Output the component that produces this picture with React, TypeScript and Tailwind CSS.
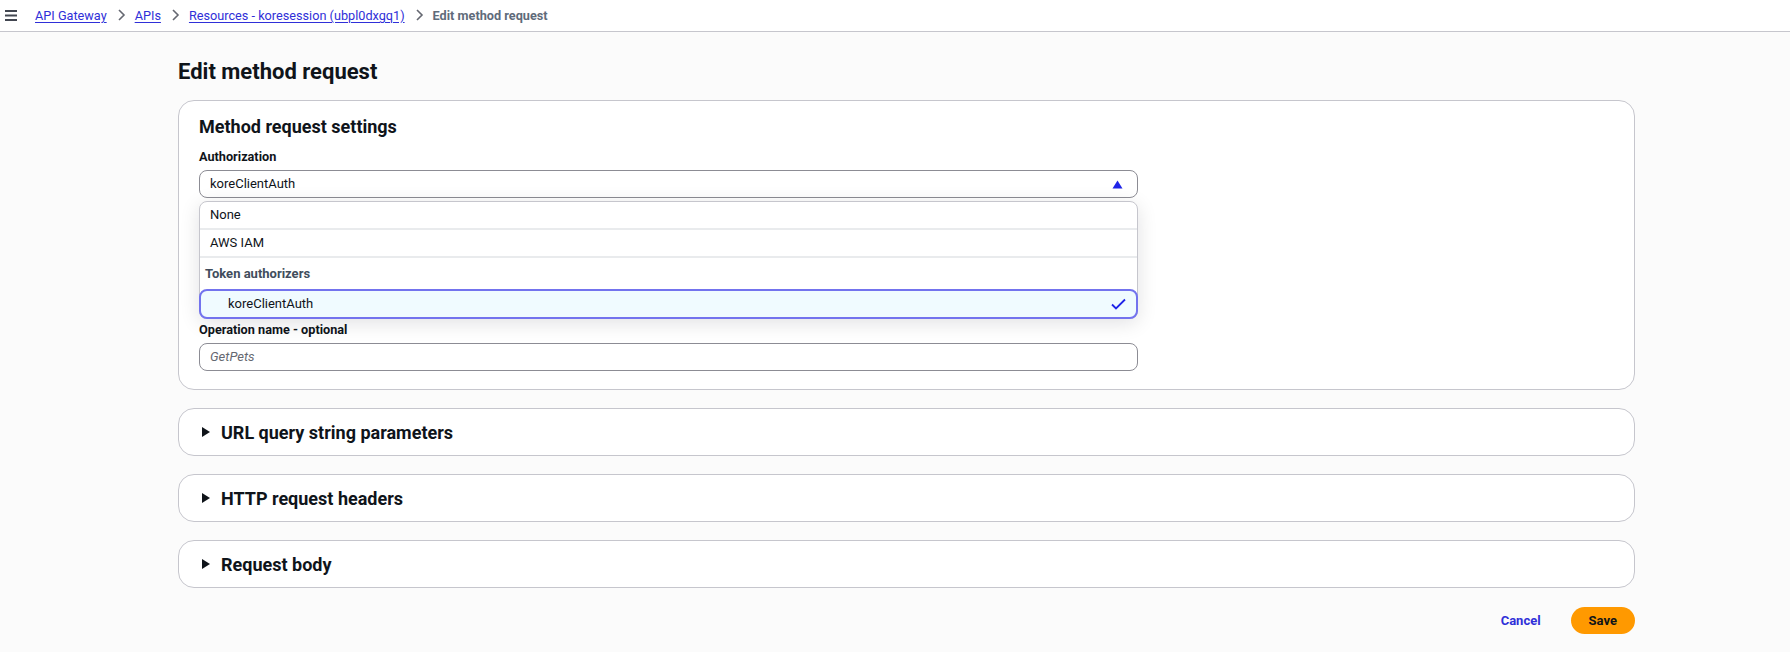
import React from 'react';

const font = { fontFamily: 'Roboto, "Noto Sans", Arial, sans-serif' };

function Chevron() {
  return (
    <svg width="16" height="16" viewBox="0 0 16 16" className="text-[#656871]">
      <path d="M6 3l5 5-5 5" fill="none" stroke="currentColor" strokeWidth="1.6" />
    </svg>
  );
}

function Caret() {
  return (
    <svg width="10" height="12" viewBox="0 0 10 12">
      <path d="M1 1L9 6 1 11z" fill="#0f141a" />
    </svg>
  );
}

function Collapsed({ title }: { title: string }) {
  return (
    <div className="flex h-[48px] items-center gap-[10px] rounded-[16px] border border-[#c6c6cd] bg-white pl-[22px]">
      <Caret />
      <h3 className="text-[18px] font-bold text-[#0f141a]">{title}</h3>
    </div>
  );
}

export default function App() {
  return (
    <div className="min-h-screen bg-[#fbfbfb] text-[#0f141a]" style={font}>
      {/* breadcrumbs */}
      <div className="flex h-[32px] items-center border-b border-[#c6c6cd] bg-white pl-[5px]">
        <svg width="13" height="11" viewBox="0 0 13 11" className="mr-[17px]">
          <path d="M0 1h12M0 5.5h12M0 10h12" stroke="#424650" strokeWidth="1.8" />
        </svg>
        <nav className="flex items-center gap-[6px] text-[12.7px]">
          <a className="text-[#2f2fd8] underline underline-offset-2">API Gateway</a>
          <Chevron />
          <a className="text-[#2f2fd8] underline underline-offset-2">APIs</a>
          <Chevron />
          <a className="text-[#2f2fd8] underline underline-offset-2">Resources - koresession (ubpl0dxgq1)</a>
          <Chevron />
          <span className="font-bold text-[#5f6b7a]">Edit method request</span>
        </nav>
      </div>

      <main className="pl-[178px] pr-[155px] pt-[26px]">
        <h1 className="text-[22px] font-bold leading-[28px]">Edit method request</h1>

        <section className="mt-[14px] rounded-[16px] border border-[#c6c6cd] bg-white px-[20px] pb-[18px] pt-[14px]">
          <h2 className="text-[18px] font-bold leading-[24px]">Method request settings</h2>

          <div className="mt-[9px] w-[939px]">
            <label className="block text-[12.7px] font-bold leading-[18px]">Authorization</label>
            <div className="relative mt-[4px]">
              <div className="flex h-[28px] items-center justify-between rounded-[8px] border border-[#8c8c94] bg-white pl-[10px] pr-[14px] text-[13px]">
                <span>koreClientAuth</span>
                <svg width="11" height="9" viewBox="0 0 11 9">
                  <path d="M5.5 0.5L10.5 8.5H0.5z" fill="#1f24e8" />
                </svg>
              </div>

              {/* open dropdown */}
              <div className="absolute left-0 right-0 top-[31px] z-10 rounded-[8px] border border-[#c6c6cd] bg-white text-[13px] shadow-[0_4px_20px_rgba(0,7,22,0.12)]">
                <div className="flex h-[28px] items-center border-b-2 border-[#e9ebed] pl-[10px]">None</div>
                <div className="flex h-[28px] items-center border-b-2 border-[#e9ebed] pl-[10px]">AWS IAM</div>
                <div className="flex h-[31px] items-center pl-[5px] font-bold text-[#414d5c]">Token authorizers</div>
                <div className="-mx-px -mb-px flex h-[30px] items-center justify-between rounded-[8px] border-2 border-[#7373ee] bg-[#f0fbff] pl-[27px] pr-[10px]">
                  <span>koreClientAuth</span>
                  <svg width="15" height="12" viewBox="0 0 15 12">
                    <path d="M1 6.5l4 4L14 1.5" fill="none" stroke="#1f24e8" strokeWidth="1.8" />
                  </svg>
                </div>
              </div>
            </div>
          </div>

          {/* space taken by the fields that the open list covers */}
          <div className="mt-[16px] h-[91px] w-[939px]" />

          <div className="mt-[16px] w-[939px]">
            <label className="block text-[12.7px] font-bold leading-[18px]">Operation name - optional</label>
            <div className="mt-[4px] flex h-[28px] items-center rounded-[8px] border border-[#8c8c94] bg-white pl-[10px] text-[13px] italic text-[#656871]">
              GetPets
            </div>
          </div>
        </section>

        <div className="mt-[18px] flex flex-col gap-[18px]">
          <Collapsed title="URL query string parameters" />
          <Collapsed title="HTTP request headers" />
          <Collapsed title="Request body" />
        </div>

        <div className="mt-[19px] flex items-center justify-end gap-[30px]">
          <button className="text-[13px] font-bold text-[#2f2fd8]">Cancel</button>
          <button className="h-[27px] rounded-full bg-[#ff9900] px-[18px] text-[13px] font-bold text-[#0f141a]">Save</button>
        </div>
      </main>
    </div>
  );
}
